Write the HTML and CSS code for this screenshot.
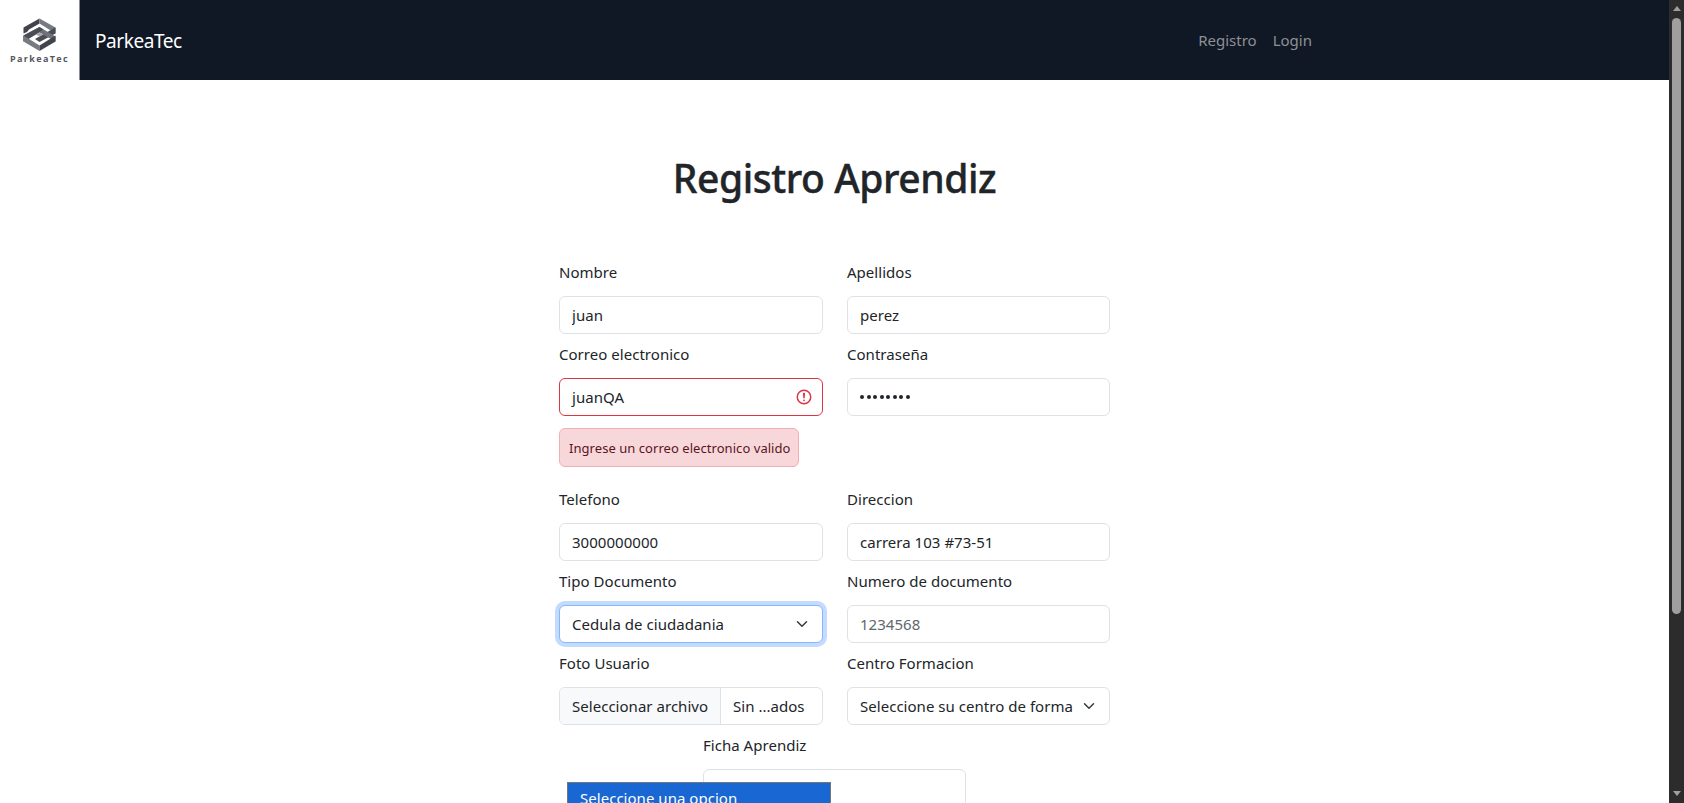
FILE: index.html
```html
<!DOCTYPE html>
<html lang="es">
<head>
<meta charset="utf-8">
<title>ParkeaTec</title>
<link rel="stylesheet" href="styles.css">
</head>
<body>
<div class="page">
  <header class="navbar">
    <div class="logo">
      <svg class="logo-mark" viewBox="0 0 33 33" width="33" height="33">
        <path d="M.5 9.500 16.500 .5v5L6 11.500l-2 2.500-3.500 1.500z" fill="#42444d"/>
        <path d="M16.500 .5 32.500 9.500v6L16.500 5.500z" fill="#777a81"/>
        <path d="M32.500 9.500v6L16.500 24l-4.500-3L27 12.500z" fill="#4b4d56"/>
        <path d="M.5 17.500 16.500 9l16 9.500v5L16.500 14.500 6 20.500l-5.500 3z" fill="#6f7279"/>
        <path d="M.5 17.500 16.500 9l4 2.500L6 20.500l-5.500 3z" fill="#4b4d56"/>
        <path d="M.5 17.500 16.500 27.500v5.500L.5 23.500z" fill="#777a81"/>
        <path d="m16.500 14.500 3.500 2-3.500 2-3.500-2z" fill="#a5a7ac"/>
        <path d="M16.500 27.500 32.500 17.500v6L16.500 33z" fill="#42444d"/>
      </svg>
      <span class="logo-text">ParkeaTec</span>
    </div>
    <a class="brand">ParkeaTec</a>
    <nav class="links"><a>Registro</a><a>Login</a></nav>
  </header>
  <main class="content">
    <h1 class="title"><span>Registro Aprendiz</span></h1>
    <form class="form">
      <div class="field"><label class="label"><span>Nombre</span></label><input class="control" value="juan"></div>
      <div class="field"><label class="label"><span>Apellidos</span></label><input class="control" value="perez"></div>
      <div class="field"><label class="label"><span>Correo electronico</span></label>
        <div class="control invalid"><span>juanQA</span>
          <svg viewBox="0 0 12 12" width="18" height="18" fill="none" stroke="#dc3545"><circle cx="6" cy="6" r="4.500"/><path stroke-linejoin="round" d="M5.800 3.600h.4L6 6.500z"/><circle cx="6" cy="8.200" r=".6" fill="#dc3545" stroke="none"/></svg>
        </div>
        <div class="alert"><span>Ingrese un correo electronico valido</span></div>
      </div>
      <div class="field"><label class="label"><span>Contraseña</span></label><div class="control dots"><i></i><i></i><i></i><i></i><i></i><i></i><i></i><i></i></div></div>
      <div class="field"><label class="label"><span>Telefono</span></label><input class="control" value="3000000000"></div>
      <div class="field"><label class="label"><span>Direccion</span></label><input class="control" value="carrera 103 #73-51"></div>
      <div class="field"><label class="label"><span>Tipo Documento</span></label>
        <div class="control select focus"><span>Cedula de ciudadania</span><svg viewBox="0 0 16 16" width="16" height="12" fill="none"><path stroke="#343a40" stroke-linecap="round" stroke-linejoin="round" stroke-width="2" d="m2 5 6 6 6-6"/></svg></div>
      </div>
      <div class="field"><label class="label"><span>Numero de documento</span></label><input class="control" placeholder="1234568"></div>
      <div class="field"><label class="label"><span>Foto Usuario</span></label>
        <div class="control file"><span class="file-button">Seleccionar archivo</span><span class="file-name">Sin ...ados</span></div>
      </div>
      <div class="field"><label class="label"><span>Centro Formacion</span></label>
        <div class="control select"><span>Seleccione su centro de forma</span><svg viewBox="0 0 16 16" width="16" height="12" fill="none"><path stroke="#343a40" stroke-linecap="round" stroke-linejoin="round" stroke-width="2" d="m2 5 6 6 6-6"/></svg></div>
      </div>
      <div class="field centered"><label class="label"><span>Ficha Aprendiz</span></label><input class="control"></div>
    </form>
    <div class="options"><span>Seleccione una opcion</span></div>
  </main>
</div>
<div class="scrollbar"><i class="arrow-up"></i><div class="thumb"></div><i class="arrow-down"></i></div>
</body>
</html>
```

FILE: styles.css
```css
* { box-sizing: border-box; }
body {
  margin: 0;
  height: 803px;
  overflow: hidden;
  display: flex;
  background: #fff;
  color: #212529;
  font: 15px/24px "Noto Sans", sans-serif;
  letter-spacing: 0.03px;
}
.page { position: relative; width: 1669px; height: 803px; overflow: hidden; }
.navbar { display: flex; align-items: center; height: 80px; background: #101725; }
.logo { width: 80px; height: 80px; padding-top: 18px; background: #fff; display: flex; flex-direction: column; align-items: center; border-right: 1px solid #8a8e96; }
.logo-mark { display: block; }
.logo-text { font: 700 9px/12px "Open Sans", sans-serif; letter-spacing: 1.350px; color: #55575f; margin-top: 2px; white-space: nowrap; }
.brand { margin: 2px 0 0 15px; font-size: 19px; letter-spacing: -0.42px; color: #fff; }
.links { margin-left: auto; margin-right: 357px; display: flex; gap: 16px; letter-spacing: 0; color: #8d9096; }
.title { margin: 68px 0 0; height: 60px; text-align: center; font-size: 39px; line-height: 59px; font-weight: 500; letter-spacing: -0.45px; -webkit-text-stroke: 0.4px #212529; }
.form { width: 551px; margin: 44px auto 0; display: grid; grid-template-columns: 264px 263px; column-gap: 24px; }
.field { display: flex; flex-direction: column; min-width: 0; padding-top: 8px; }
.label { margin-bottom: 12px; line-height: 24px; }
.control {
  display: flex;
  align-items: center;
  width: 100%;
  height: 38px;
  padding: 0 12px;
  border: 1px solid #dee2e6;
  border-radius: 6px;
  background: #fff;
  color: #212529;
  font: inherit;
  letter-spacing: inherit;
  white-space: nowrap;
}
.control::placeholder { color: #62676c; opacity: 1; }
.invalid { border-color: #dc3545; justify-content: space-between; padding-right: 9px; }
.alert { width: 240px; height: 39px; margin: 12px 0; padding: 0 9px; border: 1px solid #f1aeb5; border-radius: 6px; background: #f8d7da; color: #58151c; font-size: 13px; letter-spacing: 0.05px; line-height: 38px; white-space: nowrap; }
.dots { gap: 2.500px; padding-left: 12px; }
.dots i { width: 4px; height: 4px; border-radius: 50%; background: #212529; }
.select { justify-content: space-between; }
.focus { border-color: #86b7fe; box-shadow: 0 0 0 4px #c2dbfe; }
.file { padding: 0; overflow: hidden; }
.file-button { height: 36px; line-height: 36px; width: 161px; padding-left: 12px; background: #f8f9fa; border-right: 1px solid #dee2e6; }
.file-name { padding-left: 12px; }
.centered { grid-column: 1 / -1; width: 263px; justify-self: center; }
.options { position: absolute; left: 567px; top: 782px; width: 264px; height: 40px; padding: 3px 12px; border: 1px solid #767676; background: #1967d2; color: #fff; }
.scrollbar { width: 15px; height: 803px; background: #2c2c2c; display: flex; flex-direction: column; align-items: center; }
.thumb { width: 9px; height: 596px; margin-top: 7px; border-radius: 5px; background: #9f9f9f; }
.arrow-up, .arrow-down { border: 4.500px solid transparent; border-top: 0; border-bottom: 5px solid #9f9f9f; margin-top: 6px; }
.arrow-down { border-bottom: 0; border-top: 5px solid #9f9f9f; margin-top: auto; margin-bottom: 7px; }
```
